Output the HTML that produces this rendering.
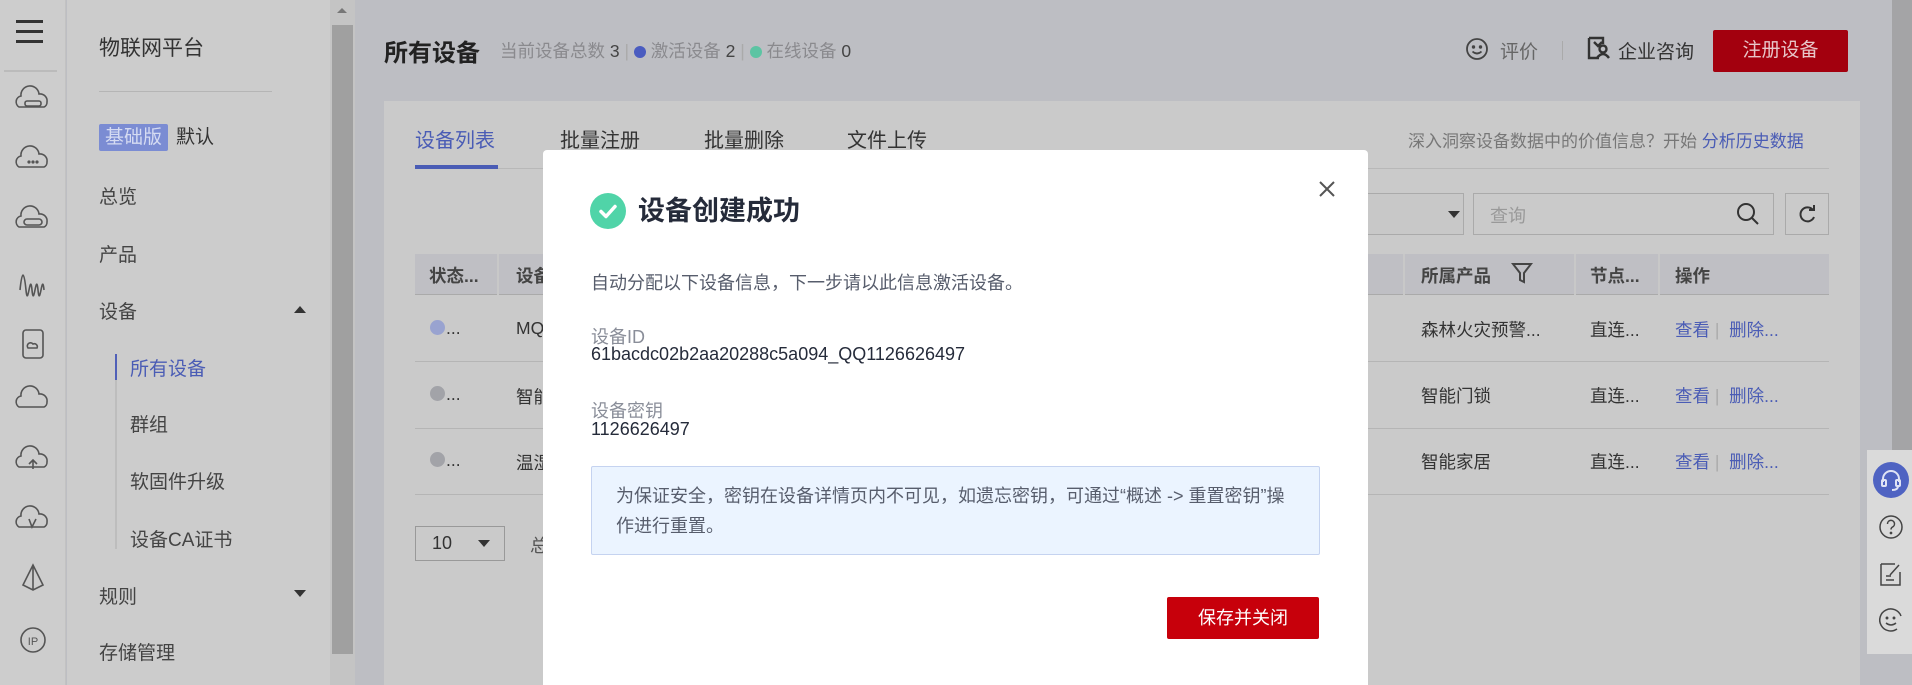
<!DOCTYPE html>
<html style="overflow:hidden"><head><meta charset="utf-8"><style>
*{margin:0;padding:0;box-sizing:border-box}
html,body{width:1912px;height:685px;overflow:hidden}
body{position:relative;background:#bdbec3;font-family:"Liberation Sans","Noto Sans CJK SC",sans-serif;color:#333}
.a{position:absolute;white-space:nowrap}
</style></head><body>
<!-- left icon bar -->
<div class="a" style="left:0;top:0;width:66px;height:685px;background:#cdcdcd;border-right:1px solid #c2c2c2"></div>
<div class="a" style="left:16px;top:20px;width:27px;height:3px;background:#333;box-shadow:0 10px 0 #333,0 20px 0 #333"></div>
<div class="a" style="left:4px;top:70px;width:53px;height:2px;background:#bbb"></div>
<svg class="a" style="left:0;top:80px" width="66" height="600" fill="none" stroke="#555" stroke-width="1.6">
<g transform="translate(33,21)"><path d="M-14 6a6 6 0 0 1 2-11a9 9 0 0 1 18-2a7 7 0 0 1 8 8a5 5 0 0 1-3 5z"/><rect x="-8" y="0" width="16" height="5" rx="2"/></g>
<g transform="translate(33,81)"><path d="M-14 6a6 6 0 0 1 2-11a9 9 0 0 1 18-2a7 7 0 0 1 8 8a5 5 0 0 1-3 5z"/><circle cx="-4" cy="1" r=".8"/><circle cx="0" cy="1" r=".8"/><circle cx="4" cy="1" r=".8"/></g>
<g transform="translate(33,141)"><path d="M-14 6a6 6 0 0 1 2-11a9 9 0 0 1 18-2a7 7 0 0 1 8 8a5 5 0 0 1-3 5z"/><rect x="-9" y="-2" width="18" height="6" rx="3"/></g>
<path d="M20 210c2-20 4-20 6 0s4-20 6 0 4-20 6 0 4-20 6 0"/>
<rect x="23" y="250" width="20" height="28" rx="3"/><path d="M28 268a3 3 0 0 1 5-4a3 3 0 0 1 4 4z"/>
<g transform="translate(33,321)"><path d="M-14 6a6 6 0 0 1 2-11a9 9 0 0 1 18-2a7 7 0 0 1 8 8a5 5 0 0 1-3 5z"/></g>
<g transform="translate(33,381)"><path d="M-14 6a6 6 0 0 1 2-11a9 9 0 0 1 18-2a7 7 0 0 1 8 8a5 5 0 0 1-3 5z"/><path d="M0 8v-9m-4 4l4-4 4 4"/></g>
<g transform="translate(33,441)"><path d="M-14 6a6 6 0 0 1 2-11a9 9 0 0 1 18-2a7 7 0 0 1 8 8a5 5 0 0 1-3 5z"/><path d="M-4 -2l3 8 4-8"/></g>
<path d="M33 485l-10 20 10 5 10-5z M33 485v25"/>
<circle cx="33" cy="560" r="12"/>
<text x="33" y="565" font-size="11" fill="#555" stroke="none" text-anchor="middle" font-family="Liberation Sans">IP</text>
</svg>
<!-- sidebar -->
<div class="a" style="left:67px;top:0;width:265px;height:685px;background:#cccccc"></div>
<div class="a" style="left:99px;top:32px;font-size:21px;color:#333">物联网平台</div>
<div class="a" style="left:99px;top:91px;width:173px;height:1px;background:#b5b5b5"></div>
<div class="a" style="left:99px;top:124px;height:27px;padding:0 6px;background:#7b8cd3;color:#d5dbf2;font-size:19px;line-height:27px;border-radius:2px">基础版</div>
<div class="a" style="left:176px;top:124px;font-size:19px;line-height:27px;color:#333">默认</div>
<div class="a" style="left:99px;top:182px;font-size:19px;color:#444">总览</div>
<div class="a" style="left:99px;top:240px;font-size:19px;color:#444">产品</div>
<div class="a" style="left:99px;top:297px;font-size:19px;color:#444">设备</div>
<div class="a" style="left:294px;top:306px;border:6px solid transparent;border-bottom:7px solid #333;border-top:0"></div>
<div class="a" style="left:115px;top:354px;width:2px;height:195px;background:#bdbdbd"></div>
<div class="a" style="left:115px;top:354px;width:2px;height:26px;background:#5060b8"></div>
<div class="a" style="left:130px;top:354px;font-size:19px;color:#4a5cb5">所有设备</div>
<div class="a" style="left:130px;top:410px;font-size:19px;color:#444">群组</div>
<div class="a" style="left:130px;top:467px;font-size:19px;color:#444">软固件升级</div>
<div class="a" style="left:130px;top:525px;font-size:19px;color:#444">设备CA证书</div>
<div class="a" style="left:99px;top:582px;font-size:19px;color:#444">规则</div>
<div class="a" style="left:294px;top:590px;border:6px solid transparent;border-top:7px solid #333;border-bottom:0"></div>
<div class="a" style="left:99px;top:638px;font-size:19px;color:#444">存储管理</div>
<!-- scrollbar -->
<div class="a" style="left:330px;top:0;width:25px;height:685px;background:#c4c4c4"></div>
<div class="a" style="left:337px;top:8px;border:5px solid transparent;border-bottom:5px solid #777;border-top:0"></div>
<div class="a" style="left:332px;top:25px;width:21px;height:629px;background:#a0a0a0"></div>
<!-- header -->
<div class="a" style="left:384px;top:33px;font-size:24px;font-weight:bold;color:#222">所有设备</div>
<div class="a" style="left:500px;top:38px;font-size:17.5px;color:#8a8a8e">当前设备总数 <span style="color:#444">3</span> <span style="color:#aaa">|</span> <span style="display:inline-block;width:12px;height:12px;border-radius:6px;background:#4a5cc0;vertical-align:-1px"></span> 激活设备 <span style="color:#444">2</span> <span style="color:#aaa">|</span> <span style="display:inline-block;width:12px;height:12px;border-radius:6px;background:#5cc4a3;vertical-align:-1px"></span> 在线设备 <span style="color:#444">0</span></div>
<svg class="a" style="left:1465px;top:37px" width="24" height="24" fill="none" stroke="#444" stroke-width="1.8"><circle cx="12" cy="12" r="10"/><circle cx="8.5" cy="10" r=".8" fill="#444"/><circle cx="15.5" cy="10" r=".8" fill="#444"/><path d="M7.5 14.5q4.5 4 9 0"/></svg>
<div class="a" style="left:1500px;top:37px;font-size:19px;color:#666">评价</div>
<div class="a" style="left:1562px;top:41px;width:1px;height:19px;background:#aaa"></div>
<svg class="a" style="left:1586px;top:36px" width="26" height="24" fill="none" stroke="#333" stroke-width="2.4"><path d="M3 2h14v6M3 2v20h10"/><circle cx="17" cy="13" r="3.5"/><path d="M11 22q6-8 12 0"/><path d="M8 6l4 4 4-4"/></svg>
<div class="a" style="left:1618px;top:37px;font-size:19px;color:#333">企业咨询</div>
<div class="a" style="left:1713px;top:30px;width:135px;height:42px;background:#a3000e;color:#e8c6c9;font-size:19px;line-height:42px;text-align:center;border-radius:2px">注册设备</div>
<!-- card -->
<div class="a" style="left:384px;top:101px;width:1476px;height:584px;background:#cacaca"></div>
<div class="a" style="left:415px;top:124px;font-size:20px;color:#4a5cb5">设备列表</div>
<div class="a" style="left:560px;top:124px;font-size:20px;color:#333">批量注册</div>
<div class="a" style="left:704px;top:124px;font-size:20px;color:#333">批量删除</div>
<div class="a" style="left:847px;top:124px;font-size:20px;color:#333">文件上传</div>
<div class="a" style="left:415px;top:168px;width:1414px;height:1px;background:#b8b8b8"></div>
<div class="a" style="left:415px;top:165px;width:83px;height:4px;background:#4a5cb5"></div>
<div class="a" style="left:1408px;top:127px;font-size:17px;color:#777">深入洞察设备数据中的价值信息？开始 <span style="color:#4a5cb5">分析历史数据</span></div>
<div class="a" style="left:1300px;top:193px;width:164px;height:42px;border:1px solid #aaa;background:#c8c8c8"></div>
<div class="a" style="left:1448px;top:211px;border:6px solid transparent;border-top:7px solid #333;border-bottom:0"></div>
<div class="a" style="left:1473px;top:193px;width:301px;height:42px;border:1px solid #aaa"></div>
<div class="a" style="left:1490px;top:202px;font-size:18px;color:#999">查询</div>
<svg class="a" style="left:1735px;top:201px" width="26" height="26" fill="none" stroke="#333" stroke-width="2"><circle cx="11" cy="11" r="8"/><path d="M17 17l6 6"/></svg>
<div class="a" style="left:1785px;top:193px;width:44px;height:42px;border:1px solid #aaa"></div>
<svg class="a" style="left:1797px;top:204px" width="20" height="20" fill="none" stroke="#333" stroke-width="2"><path d="M16 6A7 7 0 1 0 17 13"/><path d="M12 6h5V1" fill="none"/></svg>
<div class="a" style="left:415px;top:254px;width:1414px;height:41px;background:#bfbfc4;border-bottom:1px solid #aaa"></div>
<div class="a" style="left:497px;top:254px;width:2px;height:41px;background:#c8c8c8"></div>
<div class="a" style="left:1403px;top:254px;width:2px;height:41px;background:#c8c8c8"></div>
<div class="a" style="left:1574px;top:254px;width:2px;height:41px;background:#c8c8c8"></div>
<div class="a" style="left:1658px;top:254px;width:2px;height:41px;background:#c8c8c8"></div>
<div class="a" style="left:429px;top:263px;font-size:17.5px;font-weight:bold;color:#444">状态...</div>
<div class="a" style="left:516px;top:263px;font-size:17.5px;font-weight:bold;color:#444">设备</div>
<div class="a" style="left:1421px;top:263px;font-size:17.5px;font-weight:bold;color:#444">所属产品</div>
<svg class="a" style="left:1511px;top:262px" width="22" height="22" fill="none" stroke="#444" stroke-width="2"><path d="M2 2h18l-7 9v9l-4-2v-7z"/></svg>
<div class="a" style="left:1590px;top:263px;font-size:17.5px;font-weight:bold;color:#444">节点...</div>
<div class="a" style="left:1675px;top:263px;font-size:17.5px;font-weight:bold;color:#444">操作</div>
<div class="a" style="left:415px;top:361px;width:1414px;height:1px;background:#b5b5b5"></div>
<div class="a" style="left:415px;top:428px;width:1414px;height:1px;background:#b5b5b5"></div>
<div class="a" style="left:415px;top:494px;width:1414px;height:1px;background:#b5b5b5"></div>
<div class="a" style="left:430px;top:320px;width:15px;height:15px;border-radius:8px;background:#99a3d0"></div>
<div class="a" style="left:430px;top:386px;width:15px;height:15px;border-radius:8px;background:#a2a3a8"></div>
<div class="a" style="left:430px;top:452px;width:15px;height:15px;border-radius:8px;background:#a2a3a8"></div>
<div class="a" style="left:446px;top:318px;font-size:17.5px;color:#333">...</div>
<div class="a" style="left:446px;top:384px;font-size:17.5px;color:#333">...</div>
<div class="a" style="left:446px;top:450px;font-size:17.5px;color:#333">...</div>
<div class="a" style="left:516px;top:318px;font-size:17.5px;color:#333">MQ</div>
<div class="a" style="left:516px;top:384px;font-size:17.5px;color:#333">智能</div>
<div class="a" style="left:516px;top:450px;font-size:17.5px;color:#333">温湿</div>
<div class="a" style="left:1421px;top:317px;font-size:17.5px;color:#333">森林火灾预警...</div>
<div class="a" style="left:1421px;top:383px;font-size:17.5px;color:#333">智能门锁</div>
<div class="a" style="left:1421px;top:449px;font-size:17.5px;color:#333">智能家居</div>
<div class="a" style="left:1590px;top:317px;font-size:17.5px;color:#333">直连...</div>
<div class="a" style="left:1590px;top:383px;font-size:17.5px;color:#333">直连...</div>
<div class="a" style="left:1590px;top:449px;font-size:17.5px;color:#333">直连...</div>
<div class="a" style="left:1675px;top:317px;font-size:17.5px;color:#4a5cb5">查看 <span style="color:#aaa">|</span> &nbsp;删除...</div>
<div class="a" style="left:1675px;top:383px;font-size:17.5px;color:#4a5cb5">查看 <span style="color:#aaa">|</span> &nbsp;删除...</div>
<div class="a" style="left:1675px;top:449px;font-size:17.5px;color:#4a5cb5">查看 <span style="color:#aaa">|</span> &nbsp;删除...</div>
<div class="a" style="left:415px;top:526px;width:90px;height:35px;border:1px solid #999"></div>
<div class="a" style="left:432px;top:533px;font-size:18px;color:#333">10</div>
<div class="a" style="left:478px;top:540px;border:6px solid transparent;border-top:7px solid #333;border-bottom:0"></div>
<div class="a" style="left:530px;top:532px;font-size:18px;color:#555">总</div>
<!-- right float -->
<div class="a" style="left:1892px;top:0;width:20px;height:450px;background:#a4a4a6"></div>
<div class="a" style="left:1867px;top:450px;width:45px;height:204px;background:#dadada"></div>
<div class="a" style="left:1873px;top:462px;width:36px;height:36px;border-radius:18px;background:#4f63c2"></div>
<svg class="a" style="left:1873px;top:462px" width="36" height="36" fill="none" stroke="#dfe3f5" stroke-width="2"><path d="M10 20v-3a8 8 0 0 1 16 0v3"/><rect x="9" y="18" width="4" height="6" rx="1"/><rect x="23" y="18" width="4" height="6" rx="1"/><path d="M25 24q0 4-6 4"/></svg>
<svg class="a" style="left:1877px;top:513px" width="28" height="28" fill="none" stroke="#444" stroke-width="1.5"><circle cx="14" cy="14" r="11"/><path d="M10.5 11a3.5 3.5 0 1 1 5 3c-1 .6-1.5 1.2-1.5 2.5"/><circle cx="14" cy="20" r=".6" fill="#444"/></svg>
<svg class="a" style="left:1878px;top:560px" width="26" height="28" fill="none" stroke="#444" stroke-width="1.5"><path d="M3 4h14M3 4v21h19V12"/><path d="M12 15l9-10"/><path d="M8 16h5M8 20h8"/></svg>
<svg class="a" style="left:1877px;top:606px" width="28" height="28" fill="none" stroke="#444" stroke-width="1.5"><path d="M24 10A11 11 0 1 0 20 23"/><circle cx="10" cy="12" r=".7" fill="#444"/><circle cx="17" cy="12" r=".7" fill="#444"/><path d="M9 17q5 4 10 0"/></svg>
<!-- modal -->
<div class="a" style="left:543px;top:150px;width:825px;height:535px;background:#fff;border-radius:4px 4px 0 0"></div>
<div class="a" style="left:590px;top:193px;width:36px;height:36px;border-radius:18px;background:#50d4a8"></div>
<svg class="a" style="left:590px;top:193px" width="36" height="36" fill="none" stroke="#fff" stroke-width="3.5" stroke-linecap="round" stroke-linejoin="round"><path d="M11 18.5l5 5 9-10"/></svg>
<div class="a" style="left:638px;top:193px;font-size:27px;font-weight:bold;color:#252b3a;line-height:36px">设备创建成功</div>
<svg class="a" style="left:1318px;top:180px" width="18" height="18" stroke="#555" stroke-width="2"><path d="M2 2l14 14M16 2L2 16"/></svg>
<div class="a" style="left:591px;top:269px;font-size:18px;color:#575d6c">自动分配以下设备信息，下一步请以此信息激活设备。</div>
<div class="a" style="left:591px;top:323px;font-size:18px;color:#8a8e99">设备ID</div>
<div class="a" style="left:591px;top:344px;font-size:18px;color:#252b3a">61bacdc02b2aa20288c5a094_QQ1126626497</div>
<div class="a" style="left:591px;top:397px;font-size:18px;color:#8a8e99">设备密钥</div>
<div class="a" style="left:591px;top:419px;font-size:18px;color:#252b3a">1126626497</div>
<div class="a" style="left:591px;top:466px;width:729px;height:89px;background:#ebf4ff;border:1px solid #c5d3f0;border-radius:2px;padding:14px 24px;font-size:18px;line-height:30px;color:#575d6c;white-space:normal">为保证安全，密钥在设备详情页内不可见，如遗忘密钥，可通过“概述 -&gt; 重置密钥”操作进行重置。</div>
<div class="a" style="left:1167px;top:597px;width:152px;height:42px;background:#c7000b;color:#fff;font-size:18px;line-height:42px;text-align:center;border-radius:2px">保存并关闭</div>
</body></html>
